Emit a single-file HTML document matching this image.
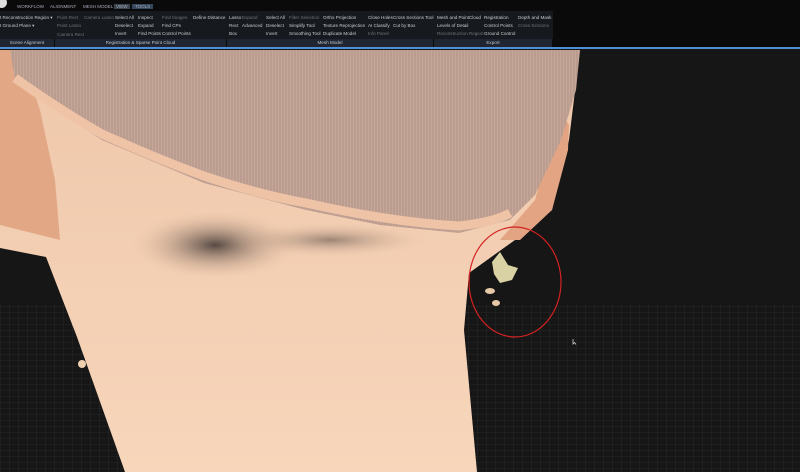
<!DOCTYPE html>
<html><head><meta charset="utf-8"><style>
*{margin:0;padding:0;box-sizing:border-box}
body{width:800px;height:472px;overflow:hidden;background:#151515;font-family:"Liberation Sans",sans-serif;position:relative}
.tb{position:absolute;left:0;top:0;width:800px;height:47px;background:#0a0a0a}
.panel{position:absolute;left:0;top:11px;width:553px;height:36px;background:#16191d}
.t{position:absolute;font-size:4.6px;color:#c8ccd2;white-space:nowrap;line-height:5px}
.d{color:#6f757c}
.tab{position:absolute;top:4px;font-size:4.5px;color:#aab;}
.sec{position:absolute;top:39px;height:8px;background:#1f2631;font-size:4.6px;color:#c0c6cf;text-align:center;line-height:8px;border-right:1px solid #0a0a0a}
.blue{position:absolute;left:0;top:47px;width:800px;height:2px;background:#4d8fd8}
</style></head><body>
<svg width="800" height="472" style="position:absolute;left:0;top:0">
<defs>
<pattern id="g" width="9" height="6" patternUnits="userSpaceOnUse"><path d="M0 0H9M0 0V6" stroke="#333" stroke-width="0.6"/></pattern>
<pattern id="cap" width="3" height="6" patternUnits="userSpaceOnUse"><rect width="3" height="6" fill="#c6a698"/><path d="M1 0V6" stroke="#ab8f83" stroke-width="0.8"/></pattern>
<radialGradient id="hair" cx="0.5" cy="0.5" r="0.5"><stop offset="0" stop-color="#3a3230" stop-opacity=".85"/><stop offset="1" stop-color="#e9c3a8" stop-opacity="0"/></radialGradient>
<linearGradient id="skin" x1="0" y1="0" x2="0" y2="1"><stop offset="0" stop-color="#efc7aa"/><stop offset="1" stop-color="#f7d6bb"/></linearGradient>
</defs>
<rect x="0" y="49" width="800" height="423" fill="#161616"/>
<rect x="0" y="305" width="800" height="167" fill="url(#g)"/>
<path d="M0 50 L580 50 L569 140 L552 210 L515 240 L469 273 L464 330 L477 472 L125 472 L77 337 L46 257 L0 248 Z" fill="url(#skin)"/>
<path d="M0 50 L20 50 L40 110 L55 180 L60 240 L40 235 L0 225Z" fill="#e0a481" opacity=".9"/>
<path d="M560 110 L569 125 L568 150 L552 210 L520 240 L500 240 L535 200Z" fill="#e2a482"/>
<ellipse cx="215" cy="245" rx="85" ry="35" fill="url(#hair)"/>
<ellipse cx="330" cy="240" rx="100" ry="18" fill="url(#hair)" opacity=".55"/>
<path d="M10 50 L580 50 L576 90 L561 140 L535 195 L510 220 L459 233 L380 225 L306 210 L204 183 L102 140 L40 100 L15 80Z" fill="url(#cap)"/>
<path d="M15 78 Q60 110 102 134 Q160 160 204 176 Q260 195 306 203 Q390 222 459 226 Q495 222 510 213" stroke="#efc3a5" stroke-width="9" fill="none"/>
<path d="M492 262 L500 252 L508 265 L518 268 L512 280 L500 283 L494 274Z" fill="#d9d2a4"/>
<ellipse cx="490" cy="291" rx="5" ry="3" fill="#e7c9a7"/>
<ellipse cx="496" cy="303" rx="4" ry="3" fill="#e7c9a7"/>
<ellipse cx="82" cy="364" rx="4" ry="4" fill="#f0cfb0"/>
<ellipse cx="515" cy="282" rx="46" ry="55" fill="none" stroke="#d52222" stroke-width="1.2"/>
<path d="M573 339 l0 5 l1.5 -1.5 l1.5 2" stroke="#ccc" stroke-width=".8" fill="none"/>
</svg>
<div class="tb">
<div style="position:absolute;left:-4px;top:-3px;width:11px;height:11px;border-radius:50%;background:#ddd"></div>
<span class="tab" style="left:17px">WORKFLOW</span>
<span class="tab" style="left:50px">ALIGNMENT</span>
<span class="tab" style="left:83px">MESH MODEL</span>
<span class="tab" style="left:114px;background:#3a4550;padding:0 2px">VIEW</span>
<span class="tab" style="left:132px;background:#34475c;padding:0 3px">TOOLS</span>
<div class="panel"></div>
<span class="t" style="left:0;top:15px">t Reconstruction Region ▾</span>
<span class="t" style="left:0;top:23px">t Ground Plane ▾</span>
<span class="t d" style="left:57px;top:15px">Point Rect</span>
<span class="t d" style="left:57px;top:23px">Point Lasso</span>
<span class="t d" style="left:57px;top:32px">Camera Rect</span>
<span class="t d" style="left:84px;top:15px">Camera Lasso</span>
<span class="t" style="left:115px;top:15px">Select All</span>
<span class="t" style="left:115px;top:23px">Deselect</span>
<span class="t" style="left:115px;top:31px">Invert</span>
<span class="t" style="left:138px;top:15px">Inspect</span>
<span class="t" style="left:138px;top:23px">Expand</span>
<span class="t" style="left:138px;top:31px">Find Points</span>
<span class="t d" style="left:162px;top:15px">Find Images</span>
<span class="t" style="left:162px;top:23px">Find CPs</span>
<span class="t" style="left:162px;top:31px">Control Points</span>
<span class="t" style="left:193px;top:15px">Define Distance</span>
<span class="t" style="left:229px;top:15px">Lasso</span>
<span class="t" style="left:229px;top:23px">Rect</span>
<span class="t" style="left:229px;top:31px">Box</span>
<span class="t d" style="left:242px;top:15px">Expand</span>
<span class="t" style="left:242px;top:23px">Advanced</span>
<span class="t" style="left:266px;top:15px">Select All</span>
<span class="t" style="left:266px;top:23px">Deselect</span>
<span class="t" style="left:266px;top:31px">Invert</span>
<span class="t d" style="left:289px;top:15px">Filter Selection</span>
<span class="t" style="left:289px;top:23px">Simplify Tool</span>
<span class="t" style="left:289px;top:31px">Smoothing Tool</span>
<span class="t" style="left:323px;top:15px">Ortho Projection</span>
<span class="t" style="left:323px;top:23px">Texture Reprojection</span>
<span class="t" style="left:323px;top:31px">Duplicate Model</span>
<span class="t" style="left:368px;top:15px">Close Holes</span>
<span class="t" style="left:368px;top:23px">AI Classify</span>
<span class="t d" style="left:368px;top:31px">Info Panel</span>
<span class="t" style="left:393px;top:15px">Cross Sections Tool</span>
<span class="t" style="left:393px;top:23px">Cut by Box</span>
<span class="t" style="left:437px;top:15px">Mesh and PointCloud</span>
<span class="t" style="left:437px;top:23px">Levels of Detail</span>
<span class="t d" style="left:437px;top:31px">Reconstruction Region</span>
<span class="t" style="left:484px;top:15px">Registration</span>
<span class="t" style="left:484px;top:23px">Control Points</span>
<span class="t" style="left:484px;top:31px">Ground Control</span>
<span class="t" style="left:518px;top:15px">Depth and Mask</span>
<span class="t d" style="left:518px;top:23px">Cross Sections</span>
<div class="sec" style="left:0;width:55px">Scene Alignment</div>
<div class="sec" style="left:55px;width:172px">Registration &amp; Sparse Point Cloud</div>
<div class="sec" style="left:227px;width:207px">Mesh Model</div>
<div class="sec" style="left:434px;width:119px">Export</div>
</div>
<div class="blue"></div>
</body></html>
